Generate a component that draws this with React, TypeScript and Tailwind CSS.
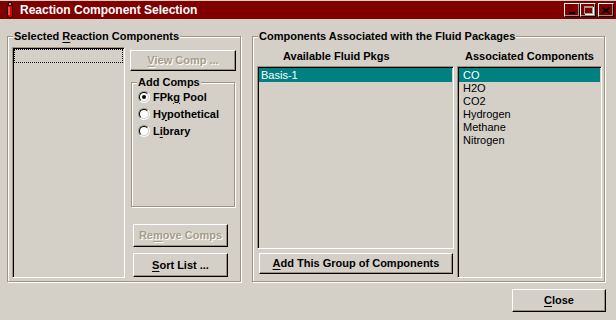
import React from 'react';
import clsx from 'clsx';

const U = ({ children }: { children: React.ReactNode }) => <span className="underline underline-offset-[2px]">{children}</span>;

function Btn({ children, className, disabled }: { children: React.ReactNode; className?: string; disabled?: boolean }) {
  return (
    <div
      className={clsx(
        'flex items-center justify-center border border-t-white border-l-white border-r-black border-b-black shadow-[inset_-1px_-1px_0_#9c917d] text-[11px] font-bold leading-none',
        disabled ? 'text-[#a69c88] [text-shadow:1px_1px_0_#fff]' : 'text-black',
        className
      )}
    >
      {children}
    </div>
  );
}

function Group({ label, className, children }: { label: React.ReactNode; className?: string; children?: React.ReactNode }) {
  return (
    <div className={clsx('relative border border-[#a0947e] shadow-[inset_1px_1px_0_#fff,1px_1px_0_#fff]', className)}>
      <span className="absolute -top-[7px] left-[5px] px-[1px] bg-[#d4d0c8] text-[11px] leading-[13px] font-bold text-black whitespace-nowrap">
        {label}
      </span>
      {children}
    </div>
  );
}

function Radio({ checked, children }: { checked?: boolean; children: React.ReactNode }) {
  return (
    <div className="flex items-center gap-[3px] h-[16px] text-[11px] font-bold leading-none">
      <div className="w-[12px] h-[12px] shrink-0 rounded-full border border-t-[#9c917d] border-l-[#9c917d] border-r-white border-b-white">
        <div className="w-full h-full rounded-full bg-white border border-t-black border-l-black border-r-[#d4d0c8] border-b-[#d4d0c8] flex items-center justify-center">
          {checked && <div className="w-[4px] h-[4px] rounded-full bg-black" />}
        </div>
      </div>
      <span>{children}</span>
    </div>
  );
}

const sunken = 'border border-t-[#9c917d] border-l-[#9c917d] border-r-white border-b-white shadow-[inset_1px_1px_0_#000]';

export default function App() {
  const comps = ['CO', 'H2O', 'CO2', 'Hydrogen', 'Methane', 'Nitrogen'];
  return (
    <div className="w-[616px] h-[320px] bg-[#d4d0c8] pt-[1px] flex flex-col font-['Liberation_Sans',Arial,sans-serif] overflow-hidden">
      {/* title bar */}
      <div className="h-[18px] bg-[#800000] flex items-center">
        <svg width="8" height="16" viewBox="0 0 8 16" className="ml-[6px]">
          <rect x="1.5" y="2.5" width="5" height="13" rx="2" fill="#e00000" stroke="#000" />
          <rect x="3" y="0.5" width="2" height="3" fill="#fff" stroke="#000" strokeWidth="0.8" />
          <line x1="3" y1="5" x2="3" y2="13" stroke="#ff9a9a" strokeWidth="1" />
        </svg>
        <span className="ml-[6px] text-white text-[12px] font-bold leading-none">Reaction Component Selection</span>
        <div className="ml-auto mr-[2px] flex items-center">
          <Btn className="w-[16px] h-[14px] items-end pb-[2px]">
            <div className="w-[6px] h-[2px] bg-black" />
          </Btn>
          <Btn className="w-[16px] h-[14px]">
            <div className="w-[9px] h-[8px] border border-[#a69c88] border-t-2 shadow-[1px_1px_0_#fff]" />
          </Btn>
          <Btn className="w-[16px] h-[14px] ml-[2px]">
            <svg width="8" height="7" viewBox="0 0 8 7">
              <path d="M0.5 0.5 L7.5 6.5 M7.5 0.5 L0.5 6.5" stroke="#000" strokeWidth="1.6" />
            </svg>
          </Btn>
        </div>
      </div>

      {/* groups */}
      <div className="flex pl-[7px] mt-[17px]">
        <Group
          className="w-[234px] h-[246px] flex pl-[4px] pt-[10px]"
          label={<>Selected <U>R</U>eaction Components</>}
        >
          <div className={clsx(sunken, 'w-[113px] h-[231px] p-[1px]')}>
            <div className="h-[14px] border border-dotted border-black" />
          </div>
          <div className="ml-[5px] w-[106px] flex flex-col mt-[3px]">
            <Btn disabled className="w-[106px] h-[21px]">
              <span><U>V</U>iew Comp ...</span>
            </Btn>
            <Group
              className="ml-[1px] w-[104px] h-[125px] mt-[11px] pt-[6px] pl-[6px]"
              label="Add Comps"
            >
              <div className="flex flex-col gap-[1px]">
                <Radio checked>FPk<U>g</U> Pool</Radio>
                <Radio>H<U>y</U>pothetical</Radio>
                <Radio>L<U>i</U>brary</Radio>
              </div>
            </Group>
            <Btn disabled className="ml-[3px] mt-[17px] w-[95px] h-[23px]">
              <span>Re<U>m</U>ove Comps</span>
            </Btn>
            <Btn className="ml-[3px] mt-[6px] w-[95px] h-[24px]">
              <span><U>S</U>ort List ...</span>
            </Btn>
          </div>
        </Group>

        <Group
          className="ml-[11px] w-[353px] h-[246px] flex pl-[4px] pt-[12px]"
          label="Components Associated with the Fluid Packages"
        >
          <div className="w-[197px] flex flex-col">
            <div className="h-[14px] pl-[26px] text-[11px] font-bold leading-[14px]">Available Fluid Pkgs</div>
            <div className={clsx(sunken, 'mt-[3px] h-[183px] p-[1px] text-[11px] leading-[13px]')}>
              <div className="bg-[#008080] text-white h-[14px] pl-[2px] leading-[14px]">Basis-1</div>
            </div>
            <Btn className="ml-[2px] mt-[4px] w-[194px] h-[21px]">
              <span><U>A</U>dd This Group of Components</span>
            </Btn>
          </div>
          <div className="ml-[3px] w-[145px] flex flex-col">
            <div className="h-[14px] text-center text-[11px] font-bold leading-[14px]">Associated Components</div>
            <div className={clsx(sunken, 'mt-[3px] h-[212px] p-[1px] text-[11px]')}>
              {comps.map((c, i) => (
                <div
                  key={c}
                  className={clsx('h-[13px] pl-[4px] leading-[13px]', i === 0 ? 'bg-[#008080] text-white h-[14px] leading-[14px]' : 'text-black')}
                >
                  {c}
                </div>
              ))}
            </div>
          </div>
        </Group>
      </div>

      {/* close */}
      <div className="flex justify-end pr-[10px] mt-[7px]">
        <Btn className="w-[94px] h-[23px]">
          <span><U>C</U>lose</span>
        </Btn>
      </div>
    </div>
  );
}
